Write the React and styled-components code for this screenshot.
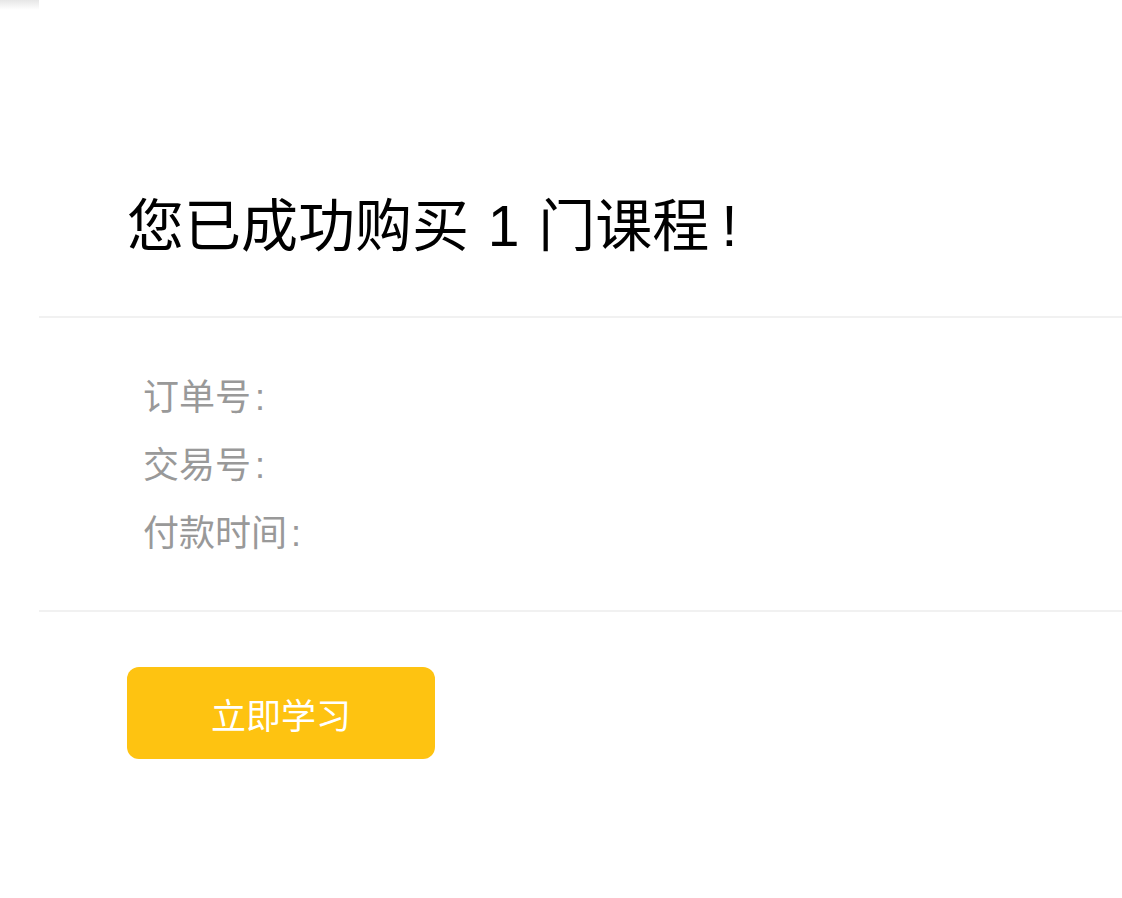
import React from 'react';
import styled, { createGlobalStyle } from 'styled-components';

const GlobalStyle = createGlobalStyle`
  html, body {
    margin: 0;
    padding: 0;
    background: #fff;
  }
  body {
    font-family: "Liberation Sans", "Noto Sans CJK SC", sans-serif;
  }
`;

const Page = styled.div`
  display: flex;
  min-height: 898px;
`;

const Aside = styled.aside`
  width: 39px;
  flex-shrink: 0;
`;

const Shade = styled.div`
  height: 10px;
  background: linear-gradient(to bottom, #e6e6e6, #ffffff);
`;

const Main = styled.main`
  flex: 1;
`;

const Header = styled.section`
  padding: 196px 0 60px 88px;
  border-bottom: 2px solid #f1f1f1;
`;

const Title = styled.h1`
  margin: 0;
  font-size: 57px;
  line-height: 60px;
  font-weight: 400;
  word-spacing: 3px;
  color: #000;
`;

const Bang = styled.span`
  margin-left: 12px;
`;

const Info = styled.section`
  padding: 46px 0 42px 104px;
  border-bottom: 2px solid #f1f1f1;
`;

const Row = styled.div`
  font-size: 36px;
  line-height: 68px;
  color: #999;
`;

const Colon = styled.span`
  margin-left: 4px;
`;

const Actions = styled.section`
  padding: 55px 0 0 88px;
`;

const Button = styled.button`
  width: 308px;
  height: 92px;
  border: 0;
  border-radius: 12px;
  background: #fec311;
  color: #fff;
  font-family: inherit;
  font-size: 35px;
  cursor: pointer;
`;

const fields = ['订单号', '交易号', '付款时间'];

export default function App() {
  return (
    <Page>
      <GlobalStyle />
      <Aside>
        <Shade />
      </Aside>
      <Main>
        <Header>
          <Title>
            您已成功购买 1 门课程<Bang>!</Bang>
          </Title>
        </Header>
        <Info>
          {fields.map((f) => (
            <Row key={f}>
              {f}
              <Colon>:</Colon>
            </Row>
          ))}
        </Info>
        <Actions>
          <Button>立即学习</Button>
        </Actions>
      </Main>
    </Page>
  );
}
